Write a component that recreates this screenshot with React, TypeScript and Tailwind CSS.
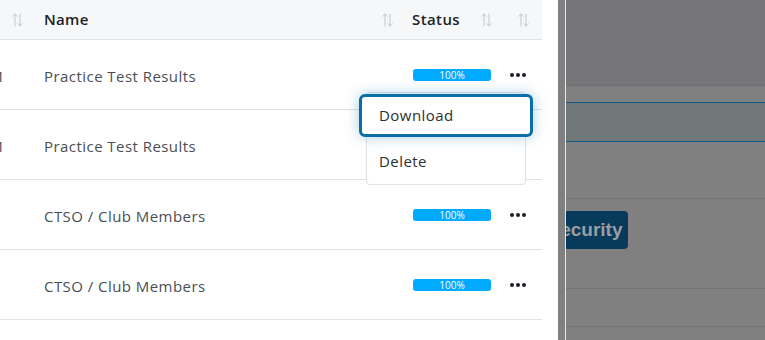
import React from 'react';

const font = { fontFamily: '"Open Sans", "Noto Sans", sans-serif' };

function SortIcon() {
  return (
    <svg width="11" height="14" viewBox="0 0 11 14" fill="none" stroke="#c3c8ce" strokeWidth="1" strokeLinecap="round" strokeLinejoin="round">
      <path d="M3 13V1M0.8 3.4L3 1l2.2 2.4" />
      <path d="M8 1v12M5.8 10.6L8 13l2.2-2.4" />
    </svg>
  );
}

function Dots() {
  return (
    <div className="flex gap-[2px]">
      <span className="w-[4px] h-[4px] rounded-full bg-[#1c1f24]" />
      <span className="w-[4px] h-[4px] rounded-full bg-[#1c1f24]" />
      <span className="w-[4px] h-[4px] rounded-full bg-[#1c1f24]" />
    </div>
  );
}

const rows = [
  { lead: '2021', name: 'Practice Test Results' },
  { lead: '2021', name: 'Practice Test Results' },
  { lead: '', name: 'CTSO / Club Members' },
  { lead: '', name: 'CTSO / Club Members' },
];

export default function App() {
  return (
    <div className="w-[765px] h-[340px] flex overflow-hidden bg-white" style={font}>
      <div className="w-[558px] shrink-0 bg-white relative overflow-hidden">
        <div className="w-[542px]">
          <div className="h-[40px] flex items-center bg-[#f6f7f9] border-b border-[#dfe3e7]">
            <div className="w-[44px] pl-[12px]"><SortIcon /></div>
            <div className="flex-1 flex items-center justify-between pr-[19px]">
              <span className="text-[15px] font-semibold tracking-[0.3px] text-[#1c1f24]">Name</span>
              <SortIcon />
            </div>
            <div className="w-[130px] flex items-center">
              <span className="w-[69px] text-[15px] font-semibold tracking-[0.4px] text-[#1c1f24]">Status</span>
              <SortIcon />
              <span className="w-[26px]" />
              <SortIcon />
            </div>
          </div>
          {rows.map((r, i) => (
            <div key={i} className="h-[70px] flex items-center border-b border-[#dfe3e7] text-[15px] tracking-[0.45px] text-[#4a4f55]">
              <div className="w-[44px] pt-[4px] flex justify-end">
                <span className="-mr-[37px] mr-auto -ml-[31px]">{r.lead}</span>
              </div>
              <div className="flex-1 pt-[4px]">{r.name}</div>
              <div className="w-[130px] flex items-center pl-[1px]">
                <div className="w-[78px] h-[12px] rounded-[3px] bg-[#00aaff] text-white text-[10px] leading-[13px] tracking-normal text-center">100%</div>
                <div className="ml-[19px]"><Dots /></div>
              </div>
            </div>
          ))}
        </div>
        <div className="absolute left-[366px] top-[92px] w-[160px] h-[93px] bg-white border border-[#dfe3e7] rounded-[4px] text-[15px] tracking-[0.45px] text-[#2b2f34]">
          <div className="absolute -left-[8px] top-[1px] w-[174px] h-[43px] rounded-[6px] border-[3px] border-[#0a6fa8] bg-white shadow-[0_0_14px_rgba(10,111,168,0.35)] flex items-center pl-[17px]">
            Download
          </div>
          <div className="absolute left-0 top-[45px] h-[46px] flex items-center pl-[12px]">Delete</div>
        </div>
      </div>
      <div className="w-[7px] bg-[#808080] shrink-0" />
      <div className="w-[1px] bg-[#e8e8e8] shrink-0" />
      <div className="flex-1 flex flex-col overflow-hidden bg-[#808080]">
        <div className="h-[86px] bg-[#76767a] border-b border-[#707070]" />
        <div className="h-[16px]" />
        <div className="h-[40px] bg-[#6f7778] border-y border-[#0d5a8a]" />
        <div className="h-[57px] border-b border-[#737373]" />
        <div className="h-[90px] border-b border-[#737373] pt-[12px]">
          <div
            className="-ml-[24px] w-[86px] h-[38px] rounded-[4px] bg-[#083a5c] flex items-center justify-center text-[19px] font-bold text-[#9a9ea2]"
            style={{ fontFamily: '"Liberation Sans", Arial, sans-serif' }}
          >
            Security
          </div>
        </div>
        <div className="h-[38px] border-b border-[#737373]" />
      </div>
    </div>
  );
}
